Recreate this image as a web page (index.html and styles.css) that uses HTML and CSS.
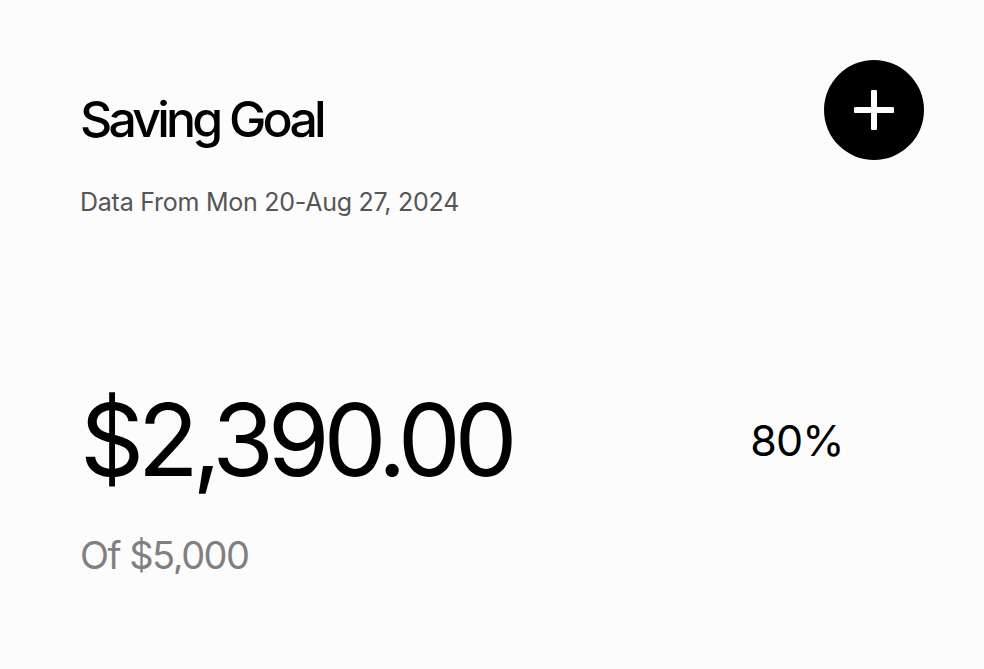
FILE: index.html
```html
<!DOCTYPE html>
<html lang="en">
<head>
  <meta charset="UTF-8">
  <meta name="viewport" content="width=device-width, initial-scale=1.0">
  <title>Saving Goal</title>
  <link rel="stylesheet" href="styles.css">
</head>
<body>
  <div class="card">
    <div class="card-header">
      <div class="heading">
        <h1 class="title">Saving Goal</h1>
        <p class="subtitle">Data From Mon 20-Aug 27, 2024</p>
      </div>
      <button class="add-button" title="Add saving">
        <svg width="40" height="40" viewBox="0 0 40 40">
          <path d="M20 2 V38 M2 20 H38" stroke="#fff" stroke-width="6" stroke-linecap="round" fill="none"/>
        </svg>
      </button>
    </div>

    <div class="goal-row">
      <div class="goal-amount">
        <div class="amount">$2,390.00</div>
        <div class="target">Of $5,000</div>
      </div>
      <div class="goal-percent">80%</div>
    </div>
  </div>
</body>
</html>
```

FILE: styles.css
```css
body {
  margin: 0;
  background-color: #fdfcfd;
  color: #000;
  font-family: Inter, "Noto Sans", sans-serif;
}

.card {
  padding: 60px 60px 0 80px;
}

.card-header {
  display: flex;
  justify-content: space-between;
  align-items: flex-start;
}

.title {
  margin: 34px 0 0;
  font-size: 50px;
  line-height: 50px;
  font-weight: 500;
  letter-spacing: -3.8px;
}

.subtitle {
  margin: 46px 0 0;
  font-size: 25px;
  line-height: 25px;
  color: #555;
  letter-spacing: -0.25px;
}

.add-button {
  width: 100px;
  height: 100px;
  border: none;
  border-radius: 50%;
  background-color: #000;
  display: flex;
  justify-content: center;
  align-items: center;
  padding: 0;
  cursor: pointer;
}

.goal-row {
  margin-top: 175px;
  display: flex;
  justify-content: space-between;
  align-items: flex-start;
}

.amount {
  font-size: 100px;
  line-height: 100px;
  letter-spacing: -6.3px;
}

.target {
  margin-top: 46px;
  font-size: 38px;
  line-height: 38px;
  color: #808080;
  letter-spacing: -0.04em;
}

.goal-percent {
  width: 254px;
  margin-top: 29px;
  text-align: center;
  font-size: 43px;
  line-height: 43px;
  letter-spacing: -0.02em;
}
```
